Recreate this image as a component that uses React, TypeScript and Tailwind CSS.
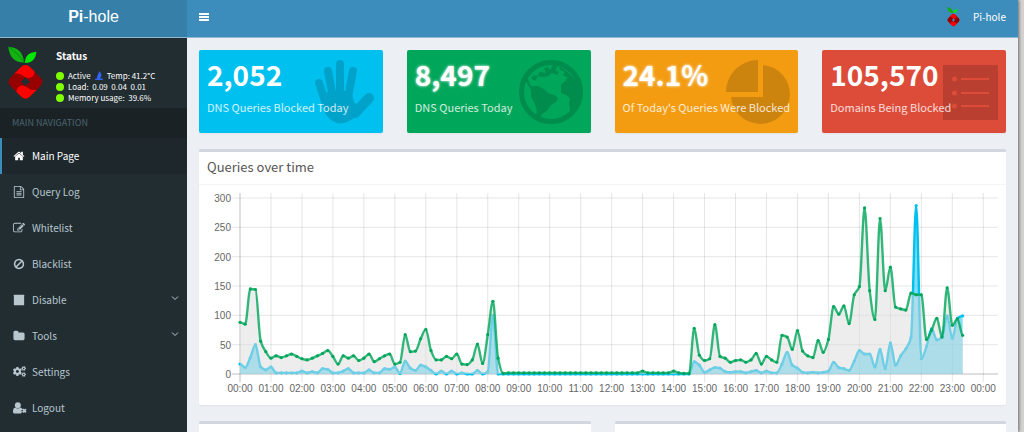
import type { ReactNode } from 'react';
import { FaCogs } from 'react-icons/fa';

const blockedPerSlot = [
    17, 11, 28, 50, 12, 7, 12, 2, 2, 2, 2, 2, 5, 2, 4, 2, 9, 8, 2, 2, 5, 9, 2, 2,
    2, 7, 2, 2, 9, 8, 12, 1, 22, 10, 6, 15, 12, 6, 0, 5, 0, 5, 0, 2, 0, 0, 6, 0,
    4, 100, 0, ...Array(37).fill(0),
    21, 15, 3, 7, 11, 10, 4, 3, 4, 4, 2, 4, 6, 2, 5, 2, 2, 17, 37, 15, 10, 3, 2, 3, 2, 3,
    5, 20, 11, 9, 6, 22, 40, 34, 34, 12, 42, 9, 53, 15, 31, 43, 62, 287, 26, 47, 77, 58, 63, 99, 61, 95, 99,
];

const queriesPerSlot = [
    88, 85, 145, 144, 56, 38, 27, 31, 28, 31, 34, 30, 26, 24, 27, 31, 35, 40, 30, 17, 31, 27, 31, 23,
    27, 34, 21, 26, 31, 34, 17, 20, 67, 38, 39, 60, 76, 40, 24, 24, 30, 26, 34, 17, 16, 24, 51, 18,
    67, 124, 27, 1, ...Array(26).fill(2), 5, 2, 2, 2, 2, 2, 5, 2, 1, 1,
    78, 32, 23, 26, 84, 30, 27, 20, 23, 24, 20, 24, 35, 17, 30, 24, 20, 66, 63, 42, 74, 39, 31, 28, 57, 37,
    59, 115, 102, 116, 86, 135, 149, 283, 142, 93, 265, 142, 182, 114, 111, 109, 138, 135, 135, 59, 75, 95, 63, 147, 83, 94, 66,
];

const LEFT = 41;
const RIGHT = 799;
const BASE = 189;
const HOUR = 30.97;

const toX = (slot: number) => LEFT + (slot * HOUR) / 6;
const toY = (value: number) => BASE - value * 0.5867;

// Monotone cubic curve, so the line never overshoots a data point
function curve(values: number[]) {
    const step = HOUR / 6;
    const ys = values.map(toY);
    const slopes = ys.map((y, i) => {
        if (i === 0 || i === ys.length - 1) return 0;
        const before = y - ys[i - 1];
        const after = ys[i + 1] - y;
        if (before * after <= 0) return 0;
        return (2 * before * after) / (before + after);
    });
    let d = `M${toX(0)} ${ys[0]}`;
    for (let i = 1; i < ys.length; i++) {
        const x = toX(i);
        d += `C${x - (step * 2) / 3} ${ys[i - 1] + slopes[i - 1] / 3} ${x - step / 3} ${ys[i] - slopes[i] / 3} ${x} ${ys[i]}`;
    }
    return d;
}

function Series({ values, line, dot, fill }: { values: number[]; line: string; dot: string; fill: string }) {
    const d = curve(values);
    return (
        <g>
            <path d={`${d}V${BASE}H${LEFT}Z`} fill={fill} />
            <path d={d} fill="none" stroke={line} strokeWidth="2.4" strokeLinejoin="round" />
            {values.map((v, i) => (
                <circle key={i} cx={toX(i)} cy={toY(v)} r="1.6" fill={dot} />
            ))}
        </g>
    );
}

function QueriesChart() {
    const hours = Array.from({ length: 25 }, (_, i) => i);
    return (
        <svg viewBox="0 0 807 220" className="block w-full font-['Liberation_Sans',Arial,sans-serif] text-[10px]" role="img" aria-label="Queries over time">
            {hours.map((h) => (
                <g key={h}>
                    <line x1={toX(h * 6)} x2={toX(h * 6)} y1="8" y2="197" stroke="#000" strokeOpacity={h === 0 ? 0.25 : 0.1} />
                    <text x={toX(h * 6)} y="207" textAnchor="middle" fill="#666">
                        {`${String(h % 24).padStart(2, '0')}:00`}
                    </text>
                </g>
            ))}
            {[0, 50, 100, 150, 200, 250, 300].map((v) => (
                <g key={v}>
                    <line x1="33" x2={RIGHT} y1={toY(v)} y2={toY(v)} stroke="#000" strokeOpacity={v === 0 ? 0.25 : 0.1} />
                    <text x="32" y={toY(v) + 4} textAnchor="end" fill="#666">{v}</text>
                </g>
            ))}
            <Series values={blockedPerSlot} line="#00c0ef" dot="#00c0ef" fill="rgba(0,192,239,0.5)" />
            <Series values={queriesPerSlot} line="rgba(0,166,90,0.8)" dot="#00a65a" fill="rgba(220,220,220,0.5)" />
        </svg>
    );
}

function PiholeLogo({ className }: { className: string }) {
    const lobe = 'M21 84L41 64Q55 50 69 64L82 77Q82 92 69 96Q59 98 50 91Q38 80 21 84Z';
    return (
        <svg viewBox="0 0 110 166" className={className} aria-hidden="true">
            <path d="M3 2C32 5 47 17 51 50C20 48 7 34 3 2Z" fill="#12b212" />
            <path d="M3 2C22 16 40 30 51 50" stroke="#087f08" strokeWidth="2" fill="none" />
            <path d="M88 17C64 19 54 30 53 51C76 51 86 38 88 17Z" fill="#00e600" />
            <path
                fillRule="evenodd"
                fill="#980000"
                d="M41 64Q55 50 69 64L99 94Q113 108 99 122L69 152Q55 166 41 152L11 122Q-3 108 11 94ZM55 92Q50 103 40 108Q50 113 55 124Q60 113 70 108Q60 103 55 92Z"
            />
            <path d={lobe} fill="#ff0000" />
            <path d={lobe} fill="#ff0000" transform="rotate(180 55 108)" />
        </svg>
    );
}

function Glyph({ d }: { d: string }) {
    return (
        <svg viewBox="0 0 1792 1792" className="size-3 fill-current" aria-hidden="true">
            <path d={d} />
        </svg>
    );
}

const glyphs = {
    home: 'M1472 992v480q0 26-19 45t-45 19h-384v-384h-256v384h-384q-26 0-45-19t-19-45v-480q0-1 .5-3t.5-3l575-474 575 474q1 2 1 6zm223-69l-62 74q-8 9-21 11h-3q-13 0-21-7l-692-577-692 577q-12 8-24 7-13-2-21-11l-62-74q-8-10-7-23.5t11-21.5l719-599q32-26 76-26t76 26l244 204v-195q0-14 9-23t23-9h192q14 0 23 9t9 23v408l219 182q10 8 11 21.5t-7 23.5z',
    file: 'M1596 380q28 28 48 76t20 88v1152q0 40-28 68t-68 28h-1344q-40 0-68-28t-28-68v-1600q0-40 28-68t68-28h896q40 0 88 20t76 48zm-444-244v376h376q-10-29-22-41l-313-313q-12-12-41-22zm384 1528v-1024h-416q-40 0-68-28t-28-68v-416h-768v1536h1280zm-1024-864q0-14 9-23t23-9h704q14 0 23 9t9 23v64q0 14-9 23t-23 9h-704q-14 0-23-9t-9-23v-64zm736 224q14 0 23 9t9 23v64q0 14-9 23t-23 9h-704q-14 0-23-9t-9-23v-64q0-14 9-23t23-9h704zm0 256q14 0 23 9t9 23v64q0 14-9 23t-23 9h-704q-14 0-23-9t-9-23v-64q0-14 9-23t23-9h704z',
    edit: 'M888 1184l116-116-152-152-116 116v56h96v96h56zm440-720q-16-16-33 1l-350 350q-17 17-1 33t33-1l350-350q17-17 1-33zm80 594v190q0 119-84.5 203.5t-203.5 84.5h-832q-119 0-203.5-84.5t-84.5-203.5v-832q0-119 84.5-203.5t203.5-84.5h832q63 0 117 25 15 7 18 23 3 17-9 29l-49 49q-14 14-32 8-23-6-45-6h-832q-66 0-113 47t-47 113v832q0 66 47 113t113 47h832q66 0 113-47t47-113v-126q0-13 9-22l64-64q15-15 35-7t20 29zm-96-738l288 288-672 672h-288v-288zm444 132l-92 92-288-288 92-92q28-28 68-28t68 28l152 152q28 28 28 68t-28 68z',
    ban: 'M1440 893q0-161-87-295l-754 753q137 89 297 89 111 0 211.5-43.5t173.5-116.5 116-174.5 43-212.5zm-999 299l755-754q-135-91-300-91-148 0-273 73t-198 199-73 274q0 162 89 299zm1223-299q0 157-61 300t-163.5 246-245 164-298.5 61-298.5-61-245-164-163.5-246-61-300 61-299.5 163.5-245.5 245-164 298.5-61 298.5 61 245 164 163.5 245.5 61 299.5z',
    stop: 'M1664 192v1408q0 64-64 64h-1408q-64 0-64-64v-1408q0-64 64-64h1408q64 0 64 64z',
    folder: 'M1728 608v704q0 92-66 158t-158 66h-1216q-92 0-158-66t-66-158v-960q0-92 66-158t158-66h320q92 0 158 66t66 158v32h672q92 0 158 66t66 158z',
};

const navItems: { label: string; icon: ReactNode; active?: boolean; expandable?: boolean }[] = [
    { label: 'Main Page', icon: <Glyph d={glyphs.home} />, active: true },
    { label: 'Query Log', icon: <Glyph d={glyphs.file} /> },
    { label: 'Whitelist', icon: <Glyph d={glyphs.edit} /> },
    { label: 'Blacklist', icon: <Glyph d={glyphs.ban} /> },
    { label: 'Disable', icon: <Glyph d={glyphs.stop} />, expandable: true },
    { label: 'Tools', icon: <Glyph d={glyphs.folder} />, expandable: true },
    { label: 'Settings', icon: <FaCogs className="size-[13px]" /> },
    {
        label: 'Logout',
        icon: (
            <svg viewBox="0 0 26 22" className="h-3 w-[14px] fill-current" aria-hidden="true">
                <circle cx="9" cy="6" r="5.5" />
                <path d="M4 10Q9 14 14 10Q17 11 18 14L15 16L17 18L15 21H2Q0 21 0 18Q0 11 4 10Z" />
                <path d="M18 13L24 19M24 13L18 19" stroke="currentColor" strokeWidth="3.5" />
            </svg>
        ),
    },
];

function Sidebar() {
    return (
        <aside className="w-[187px] shrink-0 bg-[#222d32]">
            <div className="flex h-[70px] gap-3 pl-[7px] pt-2">
                <PiholeLogo className="h-[55px] w-[37px] shrink-0" />
                <div className="text-[8px] leading-[11px] text-white">
                    <p className="mb-[7px] pt-[3px] text-[10px] font-bold leading-[14px]">Status</p>
                    <p className="flex items-center">
                        <Dot />
                        Active
                        <svg viewBox="0 0 10 12" className="mx-1 h-[9px] w-2 fill-[#3366ff]" aria-hidden="true">
                            <path d="M5 0C7 2 9 4 8 7Q7 9 6 10H10V12H0V10H3C1 7 5 5 5 0Z" />
                        </svg>
                        Temp: 41.2°C
                    </p>
                    <p className="flex items-center whitespace-pre">
                        <Dot />
                        Load:  0.09  0.04  0.01
                    </p>
                    <p className="flex items-center whitespace-pre">
                        <Dot />
                        Memory usage:  39.6%
                    </p>
                </div>
            </div>
            <div className="flex h-[30px] items-center bg-[#1a2226] pl-3 text-[9px] text-[#4b646f]">MAIN NAVIGATION</div>
            <nav>
                {navItems.map((item) => (
                    <a
                        key={item.label}
                        href="#"
                        className={`flex h-9 items-center border-l-2 pb-px pl-[11px] pr-2 text-[10px] ${
                            item.active ? 'border-[#3c8dbc] bg-[#1e282c] text-white' : 'border-transparent text-[#b8c7ce]'
                        }`}
                    >
                        <span className="w-[19px]">{item.icon}</span>
                        <span className="flex-1">{item.label}</span>
                        {item.expandable && (
                            <svg viewBox="0 0 8 8" className="mb-1 size-2" fill="none" stroke="currentColor" aria-hidden="true">
                                <path d="M1 2.5L4 5.5L7 2.5" />
                            </svg>
                        )}
                    </a>
                ))}
            </nav>
        </aside>
    );
}

function Dot() {
    return <span className="mr-1 size-2 shrink-0 rounded-full bg-[#7fff00]" />;
}

const stats = [
    {
        value: '2,052',
        label: 'DNS Queries Blocked Today',
        color: 'bg-[#00c0ef]',
        glow: '',
        icon: (
            <g fill="none" stroke="currentColor" strokeLinecap="round" strokeLinejoin="round">
                <path d="M8 23L15 44M17 11L22 38M29 4V38M42 11L37 38" strokeWidth="8" />
                <path d="M58 38L44 53" strokeWidth="10" />
                <path d="M15 42L18 52Q27 64 39 56L46 48L40 46L37 35H19Z" strokeWidth="8" fill="currentColor" />
            </g>
        ),
    },
    {
        value: '8,497',
        label: 'DNS Queries Today',
        color: 'bg-[#00a65a]',
        glow: '[text-shadow:0_0_3px_#fff]',
        icon: (
            <g fill="currentColor">
                <circle cx="32" cy="32" r="29.5" fill="none" stroke="currentColor" strokeWidth="5" />
                <path d="M5 18L9 19L12 26L19 26L25 29L29 33L37 36Q40 38 37 42L31 46L28 51L23 54L21 61L15 58L18 52L16 44L12 37L12 30L8 23Z" />
                <path d="M12 18L15 15L18 16L21 12L27 13L25 8L29 7L31 10L34 5L39 6L36 10L40 12L38 15L33 13L29 16L24 17L19 16L16 21Z" />
                <path d="M40 6L46 10L52 15L58 22L57 24L51 22L46 20L49 18L44 15L46 12L41 10Z" />
                <path d="M42 25L46 21L55 22L62 27V36L57 48L50 55L51 50L50 44L51 38L47 35L42 33Z" />
            </g>
        ),
    },
    {
        value: '24.1%',
        label: "Of Today's Queries Were Blocked",
        color: 'bg-[#f39c12]',
        glow: '[text-shadow:0_0_3px_#fff]',
        icon: (
            <g fill="currentColor">
                <path d="M32 0V32H0A32 32 0 0 1 32 0Z" />
                <path d="M37 5A29.500 29.500 0 1 1 5 37H37Z" />
            </g>
        ),
    },
    {
        value: '105,570',
        label: 'Domains Being Blocked',
        color: 'bg-[#dd4b39]',
        glow: '',
        icon: (
            <path
                fill="currentColor"
                fillRule="evenodd"
                d="M9 5H64V60H9ZM18 19a2.500 2.500 0 1 0 5 0a2.500 2.500 0 1 0-5 0M18 33a2.500 2.500 0 1 0 5 0a2.500 2.500 0 1 0-5 0M18 46a2.500 2.500 0 1 0 5 0a2.500 2.500 0 1 0-5 0M27 18H55V20H27ZM27 32H55V34H27ZM27 45H55V47H27Z"
            />
        ),
    },
];

export default function App() {
    return (
        <div className="flex min-h-screen bg-[#d3d2d1] font-['Noto_Sans_CJK_SC','Noto_Sans',sans-serif]">
            <div className="flex flex-1 flex-col bg-[#ecf0f5] shadow-[1px_0_3px_rgba(0,0,0,0.5)]">
                <header className="flex h-[38px] items-center border-b border-[#8fb9d3] bg-[#3c8dbc] text-white">
                    <a
                        href="#"
                        className="flex w-[187px] items-center justify-center self-stretch bg-[#367fa9] pb-1 font-['Liberation_Sans',Arial,sans-serif] text-base"
                    >
                        <b>Pi</b>-hole
                    </a>
                    <button type="button" aria-label="Toggle navigation" className="mb-1 ml-3">
                        <svg viewBox="0 0 10 8" className="h-2 w-[10px] fill-current" aria-hidden="true">
                            <path d="M0 0H10V2H0ZM0 3H10V5H0ZM0 6H10V8H0Z" />
                        </svg>
                    </button>
                    <a href="#" className="mb-1 ml-auto mr-3 flex items-center gap-3 text-[10px]">
                        <PiholeLogo className="h-5 w-[15px]" />
                        Pi-hole
                    </a>
                </header>
                <div className="flex flex-1">
                    <Sidebar />
                    <main className="flex min-w-0 flex-1 flex-col px-3 pt-3">
                        <div className="grid grid-cols-4 gap-6">
                            {stats.map((s) => (
                                <div key={s.label} className={`relative h-[83px] rounded-xs pl-2 pt-2 text-white shadow-xs ${s.color}`}>
                                    <svg viewBox="0 0 64 64" className="absolute right-2 top-[10px] size-16 text-black opacity-15" aria-hidden="true">
                                        {s.icon}
                                    </svg>
                                    <h3 className={`relative text-[28px] font-bold leading-8 ${s.glow}`}>{s.value}</h3>
                                    <p className="relative mt-[9px] whitespace-nowrap text-[11px] leading-4 text-white/80">{s.label}</p>
                                </div>
                            ))}
                        </div>
                        <section className="mt-4 rounded-xs border-t-[3px] border-[#d2d6de] bg-white shadow-xs">
                            <h2 className="border-b border-[#f4f4f4] px-2 pb-[7px] pt-[5px] text-[13px] leading-5 text-[#555]">Queries over time</h2>
                            <QueriesChart />
                        </section>
                        <div className="mt-4 grid flex-1 grid-cols-2 gap-6">
                            <section className="rounded-t-xs border-t-[3px] border-[#d2d6de] bg-white" />
                            <section className="rounded-t-xs border-t-[3px] border-[#d2d6de] bg-white" />
                        </div>
                    </main>
                </div>
            </div>
            <div className="w-[6px] shrink-0" />
        </div>
    );
}
